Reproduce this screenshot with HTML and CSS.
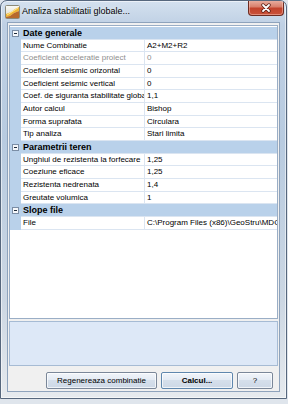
FILE: index.html
```html
<!DOCTYPE html>
<html lang="ro">
  <head>
    <meta charset="UTF-8" />
    <title>Analiza stabilitatii globale</title>
    <link rel="stylesheet" href="styles.css">
  </head>
  <body>
    <div class="window">
      <div class="titlebar">
        <svg class="app-icon" width="15" height="14" viewBox="0 0 15 14">
          <defs>
            <linearGradient id="ig" x1="0" y1="0" x2="0" y2="1">
              <stop offset="0" stop-color="#fbfbf6" />
              <stop offset="1" stop-color="#d9d6c6" />
            </linearGradient>
          </defs>
          <rect x="0.5" y="0.5" width="14" height="13" rx="1" fill="url(#ig)" stroke="#8c8a78" />
          <polygon points="1,12 1,9 6,7 10,4 14,2 14,6 9,8 5,11" fill="#f0b533" />
          <polygon points="1,13 1,12 5,11 9,8 14,6 14,13" fill="#b7692c" />
          <line x1="2" y1="10" x2="13" y2="3" stroke="#fff3a8" stroke-width="0.8" />
        </svg>
        <span class="title">Analiza stabilitatii globale...</span>
        <div class="close">
          <svg width="12" height="10" viewBox="0 0 12 10">
            <path d="M3 2 L9 8 M9 2 L3 8" stroke="#5a1f16" stroke-width="3.4" stroke-linecap="round" />
            <path d="M3 2 L9 8 M9 2 L3 8" stroke="#ffffff" stroke-width="1.8" stroke-linecap="round" />
          </svg>
        </div>
      </div>

      <div class="frame">
        <div class="client">
          <div class="grid">
            <div class="row cat">
              <span class="gutter"><i class="toggle"></i></span>
              <span class="cat-name">Date generale</span>
            </div>
            <div class="row">
              <span class="gutter"></span>
              <span class="name">Nume Combinatie</span>
              <span class="value">A2+M2+R2</span>
            </div>
            <div class="row disabled">
              <span class="gutter"></span>
              <span class="name">Coeficient acceleratie proiect</span>
              <span class="value">0</span>
            </div>
            <div class="row">
              <span class="gutter"></span>
              <span class="name">Coeficient seismic orizontal</span>
              <span class="value">0</span>
            </div>
            <div class="row">
              <span class="gutter"></span>
              <span class="name">Coeficient seismic vertical</span>
              <span class="value">0</span>
            </div>
            <div class="row">
              <span class="gutter"></span>
              <span class="name">Coef. de siguranta stabilitate globala</span>
              <span class="value">1,1</span>
            </div>
            <div class="row">
              <span class="gutter"></span>
              <span class="name">Autor calcul</span>
              <span class="value">Bishop</span>
            </div>
            <div class="row">
              <span class="gutter"></span>
              <span class="name">Forma suprafata</span>
              <span class="value">Circulara</span>
            </div>
            <div class="row">
              <span class="gutter"></span>
              <span class="name">Tip analiza</span>
              <span class="value">Stari limita</span>
            </div>
            <div class="row cat">
              <span class="gutter"><i class="toggle"></i></span>
              <span class="cat-name">Parametrii teren</span>
            </div>
            <div class="row">
              <span class="gutter"></span>
              <span class="name">Unghiul de rezistenta la forfecare</span>
              <span class="value">1,25</span>
            </div>
            <div class="row">
              <span class="gutter"></span>
              <span class="name">Coeziune eficace</span>
              <span class="value">1,25</span>
            </div>
            <div class="row">
              <span class="gutter"></span>
              <span class="name">Rezistenta nedrenata</span>
              <span class="value">1,4</span>
            </div>
            <div class="row">
              <span class="gutter"></span>
              <span class="name">Greutate volumica</span>
              <span class="value">1</span>
            </div>
            <div class="row cat">
              <span class="gutter"><i class="toggle"></i></span>
              <span class="cat-name">Slope file</span>
            </div>
            <div class="row">
              <span class="gutter"></span>
              <span class="name">File</span>
              <span class="value">C:\Program Files (x86)\GeoStru\MDC\Slope.sld</span>
            </div>
          </div>

          <div class="desc"></div>

          <div class="buttons">
            <button class="btn btn-regen">Regenereaza combinatie</button>
            <button class="btn btn-calc">Calcul...</button>
            <button class="btn btn-help">?</button>
          </div>
        </div>
      </div>
    </div>
  </body>
</html>
```

FILE: styles.css
```css
body {
  margin: 0;
  background-color: #dfe5ec;
  font-family: "Liberation Sans", Arial, sans-serif;
  color: #000;
}

/* Aero window frame */
.window {
  width: 287px;
  height: 399px;
  box-sizing: border-box;
  border: 1px solid #56677d;
  border-radius: 7px 7px 0 0;
  background: linear-gradient(#d4e1ef, #bfd0e4 24px, #b8cbe0 140px, #ccd7e3 300px, #e6eaee);
  box-shadow: inset 0 0 0 1px rgba(255, 255, 255, 0.55);
  display: flex;
  flex-direction: column;
  overflow: hidden;
}

.titlebar {
  height: 21px;
  display: flex;
  align-items: center;
  padding-left: 4px;
  flex-shrink: 0;
}

.app-icon {
  flex-shrink: 0;
}

.title {
  margin-left: 2px;
  font-size: 9px;
  line-height: 11px;
  text-shadow: 0 0 4px rgba(255, 255, 255, 0.9);
}

.close {
  margin-left: auto;
  margin-right: 2px;
  align-self: flex-start;
  margin-top: -1px;
  width: 36px;
  height: 16px;
  box-sizing: border-box;
  border: 1px solid #6d2b20;
  border-top: none;
  border-radius: 0 0 4px 4px;
  background: linear-gradient(#eab3a5, #d9806c 45%, #c2432c 55%, #c9523a);
  box-shadow: inset 0 0 0 1px rgba(255, 210, 200, 0.45);
  display: flex;
  align-items: center;
  justify-content: center;
}

.frame {
  flex: 1;
  display: flex;
  min-width: 0;
  padding: 0 6px 6px 6px;
}

.client {
  flex: 1;
  min-width: 0;
  background-color: #f0f0f0;
  border: 1px solid #8ea3bc;
  padding: 2px 1px 0 1px;
  display: flex;
  flex-direction: column;
}

/* Property grid */
.grid {
  height: 294px;
  box-sizing: border-box;
  border: 1px solid #9aaec6;
  background-color: #fff;
  padding-top: 1px;
  display: flex;
  flex-direction: column;
}

.row {
  height: 12.67px;
  display: flex;
  font-size: 8px;
  line-height: 12.67px;
  white-space: nowrap;
}

.gutter {
  width: 11px;
  flex-shrink: 0;
  background-color: #b9d1ea;
  display: flex;
  align-items: center;
  justify-content: center;
}

.name,
.value {
  box-sizing: border-box;
  border-bottom: 1px solid #dbe5f1;
  padding-left: 2px;
  overflow: hidden;
}

.name {
  width: 124px;
  flex-shrink: 0;
  border-right: 1px solid #dbe5f1;
}

.value {
  flex: 1;
  min-width: 0;
}

.disabled {
  color: #8e8e8e;
}

.cat {
  background-color: #b9d1ea;
}

.cat-name {
  flex: 1;
  padding-left: 2px;
  font-size: 9px;
  font-weight: bold;
  border-bottom: 1px solid #dbe5f1;
  box-sizing: border-box;
}

.toggle {
  position: relative;
  width: 7px;
  height: 7px;
  box-sizing: border-box;
  border: 1px solid #7b8ea6;
  background-color: #f6f8fb;
}

.toggle::after {
  content: "";
  position: absolute;
  left: 1px;
  top: 2px;
  width: 3px;
  height: 1px;
  background-color: #1d2a3a;
}

/* Description panel */
.desc {
  margin-top: 2px;
  height: 45px;
  box-sizing: border-box;
  border: 1px solid #a6bbd4;
  background-color: #dde8f7;
}

/* Buttons */
.buttons {
  display: flex;
  justify-content: flex-end;
  gap: 4px;
  margin-top: 6px;
  padding-right: 5px;
}

.btn {
  height: 17px;
  padding: 0;
  border: 1px solid #7a8799;
  border-radius: 2px;
  background: linear-gradient(#f1f5fa, #e4ebf4 45%, #d5dfeb 50%, #cdd8e6);
  box-shadow: inset 0 0 0 1px rgba(255, 255, 255, 0.7);
  font-family: "Liberation Sans", Arial, sans-serif;
  font-size: 8px;
  color: #000;
}

.btn-regen {
  width: 111px;
}

.btn-calc {
  width: 72px;
  font-weight: bold;
  border-color: #5f87ae;
}

.btn-help {
  width: 36px;
}
```
